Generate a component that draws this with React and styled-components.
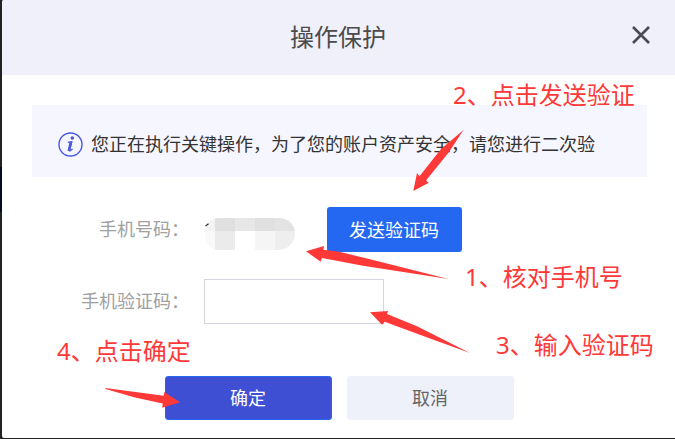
import React from "react";
import styled, { createGlobalStyle } from "styled-components";

const GlobalStyle = createGlobalStyle`
  * { box-sizing: border-box; }
  body {
    margin: 0;
    overflow: hidden;
    background: #222224;
    font-family: "Noto Sans CJK SC", sans-serif;
  }
`;

const Stage = styled.div`
  position: relative;
  width: 675px;
  height: 439px;
  padding-left: 2px;
  overflow: hidden;
  background: linear-gradient(#222224 0 167px, #020c24 167px 212px, #222224 212px);
`;

const Dialog = styled.section`
  display: flex;
  flex-direction: column;
  width: 675px;
  height: 438px;
  background: #fff;
  border-radius: 2px;
  overflow: hidden;
`;

const Header = styled.header`
  display: grid;
  grid-template-columns: 1fr auto 1fr;
  align-items: center;
  height: 75px;
  flex: none;
  padding: 0 27px 0 24px;
  background: #f0f0fa;
`;

const Title = styled.h1`
  grid-column: 2;
  margin: 0 0 3px;
  font-size: 24px;
  font-weight: 400;
  line-height: 36px;
  color: #4b4b4b;
`;

const CloseButton = styled.button`
  justify-self: end;
  display: flex;
  margin-top: -5px;
  padding: 0;
  border: 0;
  background: none;
  color: #4a4a55;
`;

const Notice = styled.div`
  display: flex;
  align-items: center;
  gap: 8px;
  flex: none;
  height: 72px;
  margin: 30px 30px 0;
  padding: 7px 0 0 26px;
  background: #f5f6ff;
  font-size: 18px;
  line-height: 28px;
  color: #333;
  white-space: nowrap;
`;

const NoticeText = styled.span`
  margin-top: -3px;
`;

const Form = styled.div`
  display: flex;
  flex-direction: column;
  gap: 27px;
  margin-top: 30px;
`;

const Field = styled.div`
  display: flex;
  align-items: center;
  height: 45px;
`;

const Label = styled.label`
  width: 187px;
  margin-right: 15px;
  padding-bottom: 3px;
  font-size: 18px;
  line-height: 28px;
  text-align: right;
  color: #a0a0a0;
`;

const PhoneValue = styled.div`
  position: relative;
  width: 123px;
  padding: 9px 0 0 1px;
`;

const Mask = styled.div`
  display: grid;
  grid-template-columns: 10px repeat(4, 20px);
  grid-template-rows: 13px 19px;
  width: 90px;
  border-radius: 14px 16px 17px 14px;
  overflow: hidden;
`;

const MaskCell = styled.span`
  background: ${({ $tone }) => $tone};
`;

const DigitTrace = styled.svg`
  position: absolute;
  left: 1px;
  top: 14px;
`;

const CodeInput = styled.input`
  width: 180px;
  height: 45px;
  padding: 0 12px;
  border: 1px solid #d5d5de;
  border-radius: 0;
  outline: none;
  background: #fff;
  font: inherit;
`;

const variants = {
  send: "width: 135px; height: 45px; background: #2468f2; color: #fff;",
  confirm: "width: 167px; height: 44px; background: #3f4fd3; border: 1px solid #2468f2; color: #fff;",
  cancel: "width: 167px; height: 44px; background: #eef1fa; color: #666;",
};

const Button = styled.button`
  display: flex;
  align-items: center;
  justify-content: center;
  padding: 0 1px 2px 0;
  border: 0;
  border-radius: 3px;
  font-family: inherit;
  font-size: 18px;
  line-height: 28px;
  ${({ $variant }) => variants[$variant]}
`;

const Actions = styled.footer`
  display: flex;
  justify-content: center;
  gap: 15px;
  margin-top: 52px;
`;

const ArrowLayer = styled.svg`
  position: absolute;
  inset: 0;
  pointer-events: none;
`;

const Annotation = styled.span`
  position: absolute;
  left: ${({ $x }) => $x}px;
  top: ${({ $y }) => $y}px;
  font-family: "Noto Sans", "Noto Sans CJK SC", sans-serif;
  font-size: 24px;
  line-height: 36px;
  white-space: nowrap;
  color: #ff3838;
`;

const maskTones = [
  "#f3f3f3", "#e0e0e0", "#e7e7e7", "#e0e0e0", "#e3e3e3",
  "#f9f9f9", "#ebebeb", "#ffffff", "#f5f5f5", "#eeeeee",
];

const annotations = [
  { x: 453, y: 77, text: "2、点击发送验证" },
  { x: 465, y: 259, text: "1、核对手机号" },
  { x: 496, y: 327, text: "3、输入验证码" },
  { x: 57, y: 333, text: "4、点击确定" },
];

const arrows = [
  "413.3,191 417,173 419.5,176.2 441,149 463.5,130 449,152 426,180.5 428.8,182.8",
  "306,251.3 324,246 323.3,249.7 338,251.5 367,258.5 448.5,279 363,265.7 322,258 320.7,261.8",
  "370,312.3 388,311 387,314 417,326.3 470,353 430,338.5 384.7,321.8 382,324.8",
  "180,402.3 164.3,392 163.7,395.8 105.2,388 105.5,389 135,397.5 162.7,403.5 162.2,407.8",
];

export default function App() {
  return (
    <>
      <GlobalStyle />
      <Stage>
        <Dialog role="dialog" aria-label="操作保护">
          <Header>
            <Title>操作保护</Title>
            <CloseButton aria-label="关闭">
              <svg width="18" height="18" viewBox="0 0 18 18" fill="none" stroke="currentColor" strokeWidth="2.6">
                <path d="M1 1L17 17M17 1L1 17" />
              </svg>
            </CloseButton>
          </Header>
          <Notice>
            <svg width="25" height="25" viewBox="0 0 25 25" fill="none">
              <circle cx="12.5" cy="12.5" r="11.5" stroke="#4a58dc" strokeWidth="1.4" />
              <circle cx="14.3" cy="6" r="1.8" fill="#4a58dc" />
              <path d="M9.8 10.4L13.8 9.7L11.5 18.3Q11.4 19.1 12.3 18.7L14.6 17" stroke="#4a58dc" strokeWidth="1.3" />
              <path d="M13 9.8L10.8 19" stroke="#4a58dc" strokeWidth="2.7" />
            </svg>
            <NoticeText>您正在执行关键操作，为了您的账户资产安全，请您进行二次验</NoticeText>
          </Notice>
          <Form>
            <Field>
              <Label>手机号码：</Label>
              <PhoneValue>
                <Mask>
                  {maskTones.map((tone, i) => (
                    <MaskCell key={i} $tone={tone} />
                  ))}
                </Mask>
                <DigitTrace width="5" height="4" viewBox="0 0 5 4">
                  <path d="M0.5 3L3.5 0.8" stroke="#333" strokeWidth="1.2" />
                </DigitTrace>
              </PhoneValue>
              <Button $variant="send">发送验证码</Button>
            </Field>
            <Field>
              <Label htmlFor="code">手机验证码：</Label>
              <CodeInput id="code" />
            </Field>
          </Form>
          <Actions>
            <Button $variant="confirm">确定</Button>
            <Button $variant="cancel">取消</Button>
          </Actions>
        </Dialog>
        <ArrowLayer width="675" height="439" viewBox="0 0 675 439" fill="#ff3838">
          {arrows.map((points) => (
            <polygon key={points} points={points} />
          ))}
        </ArrowLayer>
        {annotations.map(({ x, y, text }) => (
          <Annotation key={text} $x={x} $y={y}>{text}</Annotation>
        ))}
      </Stage>
    </>
  );
}
